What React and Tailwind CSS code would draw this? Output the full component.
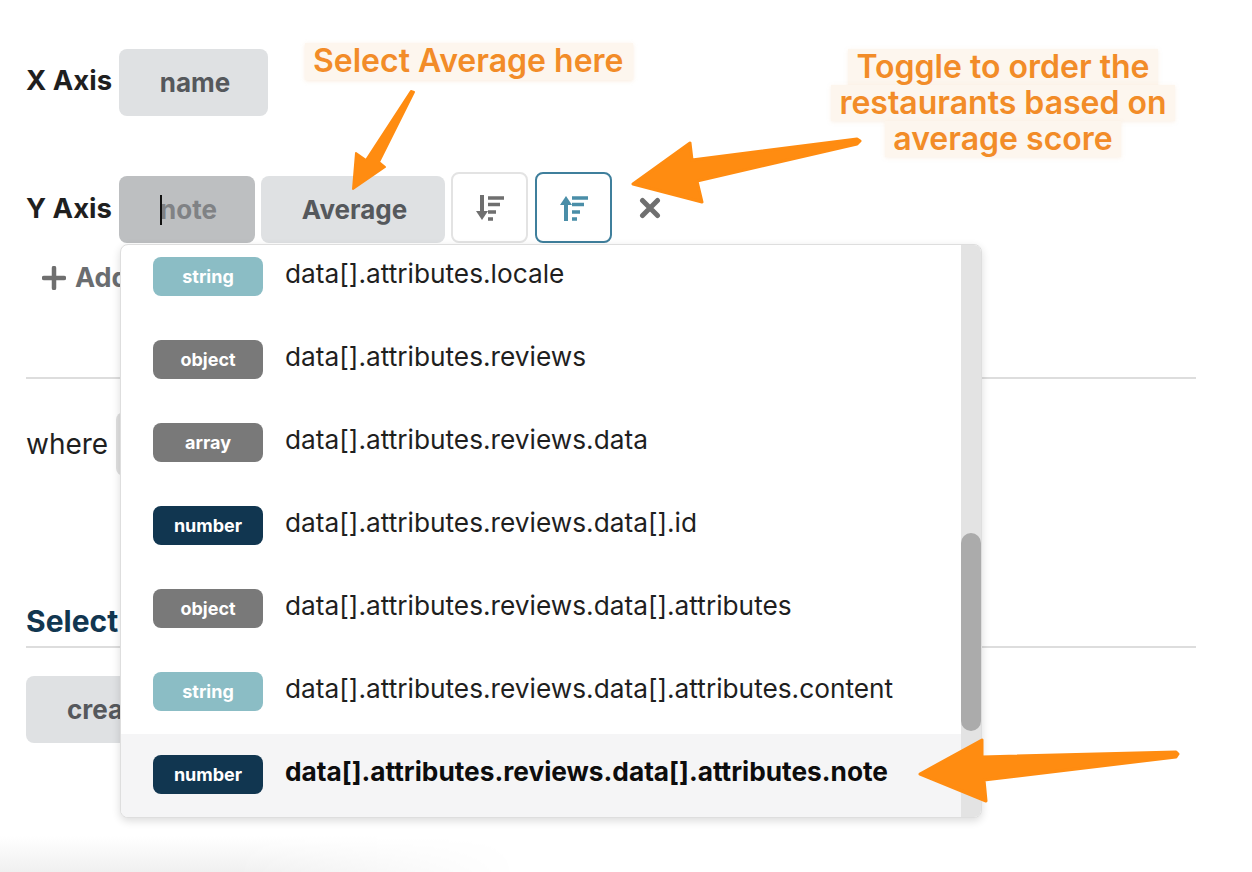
const items = [
  { type: "string", path: "data[].attributes.locale" },
  { type: "object", path: "data[].attributes.reviews" },
  { type: "array", path: "data[].attributes.reviews.data" },
  { type: "number", path: "data[].attributes.reviews.data[].id" },
  { type: "object", path: "data[].attributes.reviews.data[].attributes" },
  { type: "string", path: "data[].attributes.reviews.data[].attributes.content" },
  { type: "number", path: "data[].attributes.reviews.data[].attributes.note", active: true },
];

const badgeColors = {
  string: "bg-[#8bbdc5]",
  object: "bg-[#797979]",
  array: "bg-[#797979]",
  number: "bg-[#113650]",
};

const GrayButton = ({ className, children }) => (
  <div
    className={`h-[67px] rounded-lg bg-[#dfe1e3] flex items-center justify-center text-[26px] font-bold text-[#55585c] ${className}`}
  >
    {children}
  </div>
);

const SortIcon = ({ up, color }) => (
  <svg width="28" height="26" viewBox="0 0 28 26" fill="none" stroke={color}>
    <path d={up ? "M6 26V6" : "M6 0V20"} strokeWidth="4" />
    <path d={up ? "M0 10L6 1L12 10Z" : "M0 16L6 25L12 16Z"} fill={color} stroke="none" />
    <path d="M12 3H28M12 9.5H24M12 17H20M12 24H17" strokeWidth="3.5" />
  </svg>
);

export default function App() {
  return (
    <div className="relative w-[1252px] h-[872px] overflow-hidden bg-white font-['Inter',sans-serif] text-[#1f1f1f]">
      <div className="absolute left-0 w-[520px] bottom-0 h-[36px] bg-gradient-to-t from-[#f0f0f0] to-white [mask-image:linear-gradient(to_right,black_45%,transparent)]" />

      <div className="relative flex flex-col px-[26px] pt-[49px] w-[1196px] box-content">
        <div className="flex items-center gap-[7px] h-[67px] w-[1170px]">
          <span className="w-[86px] whitespace-nowrap text-[27.5px] font-bold -mt-[3px]">X Axis</span>
          <GrayButton className="w-[149px] pl-[3px]">name</GrayButton>
        </div>

        <div className="flex items-center gap-[7px] h-[67px] mt-[60px] w-[1170px]">
          <span className="w-[86px] whitespace-nowrap text-[27.5px] font-bold -mt-[2px]">Y Axis</span>
          <div className="flex items-end h-[67px]">
            <div className="relative w-[136px] h-[67px] rounded-lg bg-[#bdbfc1] flex items-center justify-center pl-[3px] text-[26px] font-bold text-[#808285]">
              note
              <span className="absolute left-[41px] top-[19px] w-[2px] h-[30px] bg-[#111]" />
            </div>
            <GrayButton className="w-[184px] ml-[6px] pl-[3px]">Average</GrayButton>
            <div className="ml-[6px] w-[77px] h-[71px] rounded-lg border-2 border-[#e3e3e3] flex items-center justify-center">
              <SortIcon color="#6f6f6f" />
            </div>
            <div className="ml-[7px] w-[77px] h-[71px] rounded-lg border-2 border-[#3f7f9c] flex items-center justify-center">
              <SortIcon up color="#4a8ea8" />
            </div>
            <svg className="ml-[27px] mb-[24px]" width="22" height="22" viewBox="0 0 22 22">
              <path d="M3.5 3.5L18.5 18.5M18.5 3.5L3.5 18.5" stroke="#6f6f6f" strokeWidth="5" strokeLinecap="round" />
            </svg>
          </div>
        </div>

        <div className="flex items-center gap-[9px] ml-[16px] mt-[17px] h-[36px] text-[27px] font-bold text-[#6a6d70]">
          <svg width="24" height="24" viewBox="0 0 24 24">
            <path d="M12 2V22M2 12H22" stroke="#6f6f6f" strokeWidth="4.5" strokeLinecap="round" />
          </svg>
          <span>Add</span>
        </div>

        <div className="w-[1170px] h-[2px] bg-[#dddddd] mt-[81px]" />

        <div className="flex items-center gap-[8px] h-[67px] mt-[31px] w-[1170px]">
          <span className="text-[28px]">where</span>
          <div className="w-[100px] h-[64px] rounded-lg bg-[#e0e0e0]" />
        </div>

        <div className="mt-[122px] h-[45px] text-[30px] font-bold text-[#113650]">Select</div>
        <div className="w-[1170px] h-[2px] bg-[#dddddd] mt-[2px]" />
        <GrayButton className="w-[200px] mt-[28px] justify-start pl-[41px]">create</GrayButton>
      </div>

      {/* dropdown */}
      <div className="absolute left-[120px] top-[244px] w-[862px] h-[574px] rounded-lg bg-white border border-[#dedede] shadow-[0_3px_8px_rgba(0,0,0,0.14)] overflow-hidden">
        <div className="flex h-full">
          <div className="flex-1 flex flex-col justify-end">
            {items.map((item) => (
              <div
                key={item.path}
                className={`flex items-center h-[83px] shrink-0 pl-[32px] pb-[2px] ${item.active ? "bg-[#f5f5f6] font-bold text-[#0d0d0d]" : ""}`}
              >
                <div
                  className={`w-[110px] h-[39px] pb-[1px] rounded-lg flex items-center justify-center text-[18px] font-bold text-white ${badgeColors[item.type]}`}
                >
                  {item.type}
                </div>
                <span className="ml-[22px] text-[26.25px] -mt-[5px]">{item.path}</span>
              </div>
            ))}
          </div>
          <div className="relative w-[20px] bg-[#e3e3e3]">
            <div className="absolute left-0 top-[288px] w-[20px] h-[198px] rounded-[10px] bg-[#ababab]" />
          </div>
        </div>
      </div>

      {/* annotations */}
      <div className="absolute left-[305px] top-[43px] h-[37px] bg-[#fdf6ee] pl-[8px] pr-[10px] text-[32px] leading-[36px] font-semibold text-[#f28c28] shadow-[0_1px_4px_rgba(240,200,160,0.35)]">
        Select Average here
      </div>
      <div className="absolute left-[826px] w-[354px] top-[49px] flex flex-col items-center text-[32px] leading-[36px] font-semibold text-[#f28c28] [&>span]:bg-[#fdf6ee] [&>span]:px-2 [&>span]:shadow-[0_1px_4px_rgba(240,200,160,0.25)]">
        <span>Toggle to order the</span>
        <span>restaurants based on</span>
        <span>average score</span>
      </div>

      <svg className="absolute inset-0 pointer-events-none" width="1252" height="872" viewBox="0 0 1252 872" fill="#ff8c11" stroke="#ff8c11" strokeLinejoin="round" strokeLinecap="round">
        <path d="M411 91L414 92L379 162L385 167L353 189L356 153L366 160Z" strokeWidth="2" />
        <path d="M857 139L860 141L857 144L697 181L702 202L633 184L690 143L692 160Z" strokeWidth="3" />
        <path d="M1176 752L1178 754L1176 757L984 780L986 801L920 774L982 740L982 757Z" strokeWidth="3" />
      </svg>
    </div>
  );
}
